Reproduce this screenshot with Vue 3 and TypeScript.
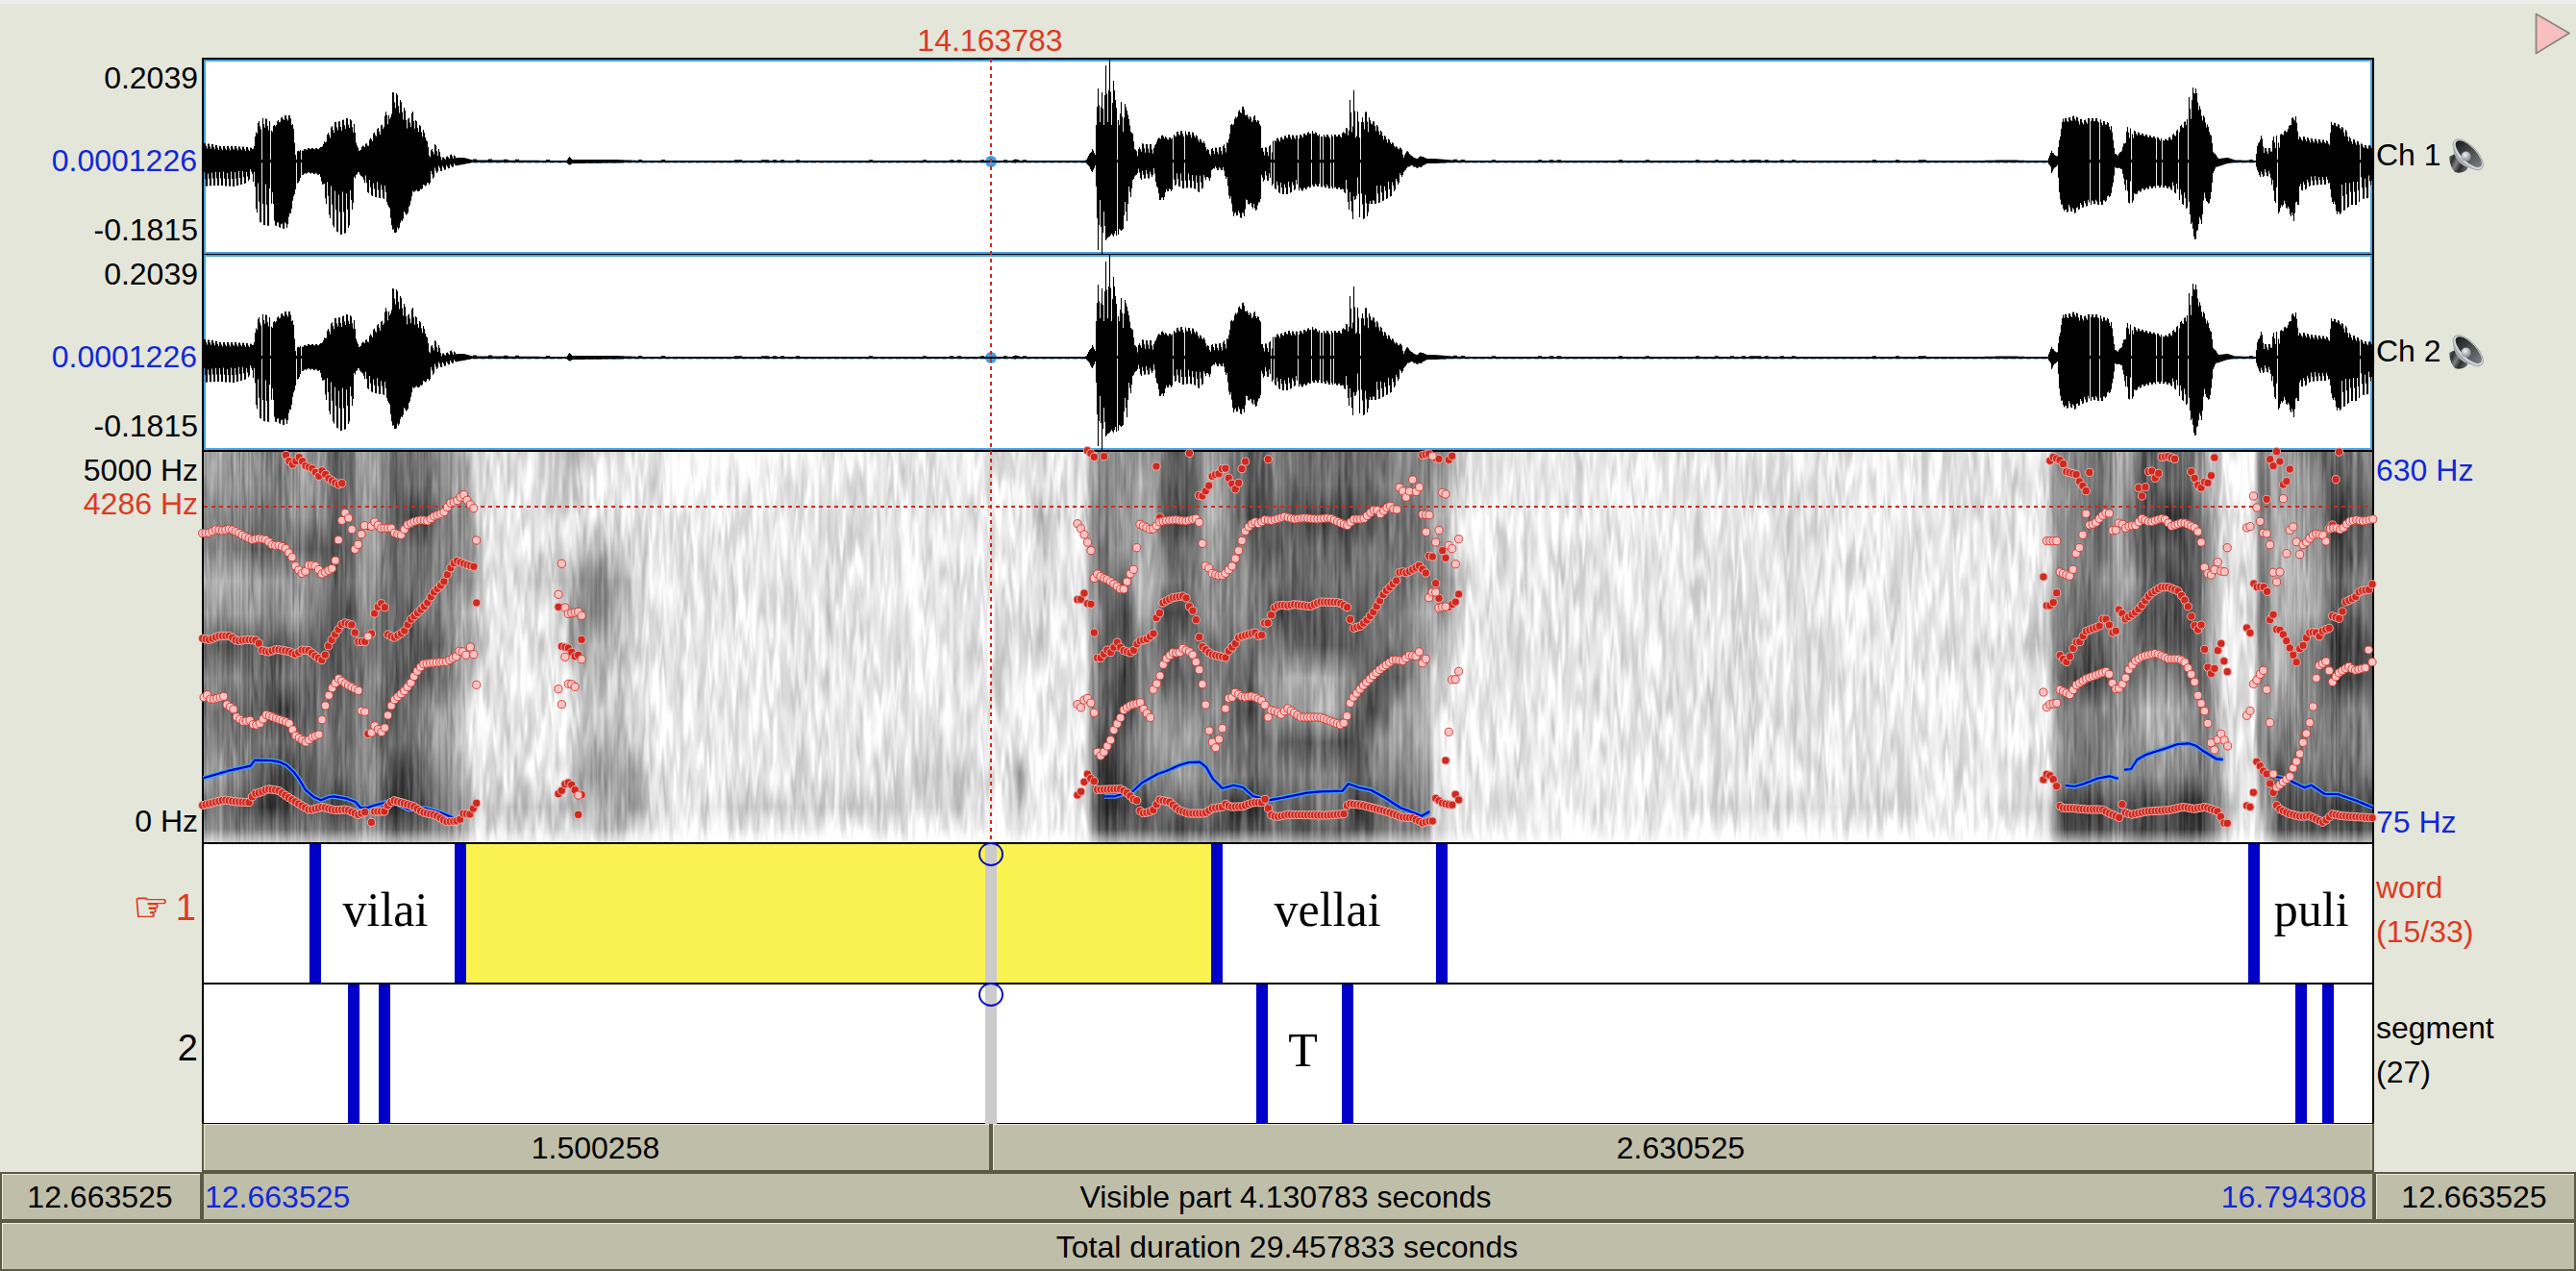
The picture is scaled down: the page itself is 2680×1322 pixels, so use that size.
<script setup lang="ts">
import { onMounted, ref } from 'vue'

type Kind = 'r' | 'p'
interface Dot { x: number; y: number; k: Kind }
interface Interval { to: number; text: string; selected?: boolean }

const LEFT = 211
const RIGHT = 2469
const CURSOR = 1031

/* ---------- waveform: [x, amplitude above zero, amplitude below zero] ---------- */
const envelope: number[][] = [
  [211,19,26],[221,18,25],[229,16,25],[243,16,26],[257,15,22],[262,14,13],[264,16,29],[266,36,49],[269,42,62],[274,46,66],
  [280,42,67],[283,36,32],[285,38,66],[289,43,68],[295,48,70],[298,48,69],[302,48,54],[305,34,39],[307,8,29],[310,12,22],
  [314,12,14],[320,14,12],[332,14,14],[336,18,27],[339,26,44],[343,34,59],[348,41,71],[354,42,76],[360,45,74],[364,44,64],
  [368,39,36],[370,21,14],[373,11,12],[378,18,19],[382,19,32],[387,28,36],[393,35,38],[398,39,38],[402,56,42],[405,44,51],
  [408,72,74],[412,71,74],[416,64,67],[420,56,57],[424,44,54],[429,52,32],[432,43,31],[436,38,31],[440,33,27],[444,21,24],
  [446,9,24],[449,13,19],[452,18,15],[456,13,9],[459,4,10],[464,5,8],[470,8,6],[475,4,4],[482,4,3],[491,1.6,1],
  [584,1,1],[589,1,1],[592,5,4],[595,2,2],[640,2,1.5],[665,1,.6],[1052,.8,.6],[1056,2.5,1.5],[1062,.8,.6],
  [1128,1,.6],[1130,2,2],[1133,8,6],[1136,13,12],[1139,8,4],[1140,38,26],[1142,76,92],[1144,41,40],[1146,72,96],[1148,38,52],
  [1150,100,82],[1152,41,79],[1154,107,78],[1156,38,75],[1158,84,78],[1160,64,72],[1162,48,82],[1164,38,70],[1166,62,72],
  [1168,31,70],[1170,60,42],[1172,53,62],[1174,44,26],[1176,31,37],[1178,29,19],[1180,13,17],[1183,11,12],[1187,19,19],
  [1192,18,17],[1197,18,18],[1200,14,12],[1203,22,26],[1206,26,40],[1210,28,40],[1213,25,31],[1218,25,31],[1221,28,26],
  [1223,31,24],[1230,32,28],[1237,31,27],[1242,30,28],[1247,24,32],[1252,21,26],[1255,14,16],[1258,11,20],[1262,15,7],
  [1266,14,9],[1272,16,9],[1275,21,18],[1277,19,32],[1280,38,42],[1283,42,57],[1287,51,56],[1291,56,59],[1294,58,57],
  [1296,48,42],[1298,50,44],[1302,44,47],[1305,48,52],[1308,43,49],[1311,41,39],[1312,14,24],[1315,15,19],[1319,14,20],
  [1322,19,24],[1326,24,28],[1332,25,34],[1340,28,34],[1347,27,29],[1353,28,31],[1365,32,26],[1373,28,26],[1382,28,28],
  [1395,28,29],[1400,35,34],[1402,34,42],[1404,64,58],[1406,38,52],[1408,74,68],[1410,31,39],[1412,52,32],[1414,31,58],
  [1418,51,60],[1422,52,57],[1425,43,44],[1430,41,44],[1434,35,43],[1440,27,40],[1447,21,36],[1453,15,26],[1458,14,16],
  [1460,4,12],[1463,12,7],[1468,6,4],[1473,3,7],[1478,6,6],[1484,3,2],[1492,3,2],[1510,1.5,1],[1530,.9,.6],
  [2050,.9,.6],[2090,1.6,1],[2110,1,.6],[2130,1,1],[2133,9,6],[2134,12,12],[2137,7,7],[2140,6,4],[2142,24,32],[2144,34,47],[2146,48,49],
  [2148,45,54],[2153,46,51],[2158,48,54],[2162,45,50],[2168,43,47],[2172,45,46],[2178,45,44],[2183,45,45],[2188,42,45],
  [2192,41,39],[2196,37,35],[2198,24,22],[2200,8,7],[2203,7,7],[2207,12,8],[2210,22,24],[2213,36,42],[2217,34,45],
  [2222,31,34],[2229,29,30],[2237,27,28],[2245,25,27],[2252,23,27],[2258,26,29],[2264,32,34],[2268,37,42],[2271,41,45],
  [2274,42,49],[2277,67,45],[2279,51,65],[2281,77,75],[2284,76,84],[2287,61,65],[2290,51,65],[2293,46,35],[2297,36,47],
  [2300,27,35],[2302,11,12],[2305,7,6],[2308,3,5],[2317,4,2],[2325,1.5,1],[2346,1,1],[2348,16,10],[2352,27,18],[2356,14,14],
  [2362,14,17],[2365,26,39],[2368,27,45],[2370,26,54],[2375,31,45],[2380,34,50],[2383,44,57],[2386,47,62],[2388,47,45],
  [2391,27,45],[2393,25,29],[2396,26,31],[2403,24,25],[2413,23,24],[2420,22,24],[2423,19,22],[2425,41,40],[2429,40,48],
  [2432,39,58],[2436,36,52],[2440,33,50],[2445,24,45],[2451,22,45],[2457,18,39],[2463,16,38],[2467,18,20],[2469,15,10],
]
const gaps = [272, 281, 308, 313, 1162, 1220, 1232, 1322, 1325, 1350, 1364, 1373, 1376, 1384, 1387, 1415, 2174, 2184, 2217, 2243, 2249, 2266, 2276, 2369, 2455]
/* stretches whose upper or lower half breaks up into separate glottal pulses */
const combs: [number, number, number, number][] = [
  [211, 262, 0.7, 0.4], [264, 283, 0.7, 0.35], [337, 370, 0.72, 0.4], [378, 402, 0.75, 0.55], [402, 440, 0.72, 0.9],
  [446, 490, 0.4, 0.4], [1183, 1202, 0.5, 0.5], [1221, 1256, 0.8, 0.45], [1258, 1278, 0.45, 0.6], [1312, 1324, 0.4, 0.5],
  [1325, 1350, 0.82, 0.6], [1400, 1424, 0.6, 0.5], [1430, 1460, 0.8, 0.55], [2210, 2220, 0.7, 0.45], [2258, 2276, 0.8, 0.6],
  [2352, 2372, 0.5, 0.55], [2391, 2422, 0.8, 0.6], [2436, 2470, 0.75, 0.4],
]

function hash(a: number, b = 0): number {
  let h = (Math.imul(a | 0, 374761393) + Math.imul(b | 0, 668265263)) | 0
  h = Math.imul(h ^ (h >>> 13), 1274126177)
  return ((h ^ (h >>> 16)) >>> 0) / 4294967296
}

function wavePath(): string {
  const out: string[] = []
  let i = 0
  for (let x = 210; x <= 2469; x++) {
    while (i < envelope.length - 2 && envelope[i + 1][0] < x) i++
    const a = envelope[i]
    const b = envelope[i + 1]
    const t = Math.min(1, Math.max(0, (x - a[0]) / (b[0] - a[0])))
    let up = a[1] + (b[1] - a[1]) * t
    let dn = a[2] + (b[2] - a[2]) * t
    if (up + dn > 8 && !(x > 1139 && x < 1180)) {
      const comb = combs.find(c => x >= c[0] && x < c[1])
      const cu = comb ? comb[2] : 0.86
      const cd = comb ? comb[3] : 0.86
      const ph = x % 4
      if (ph === 2) up *= (cu + 1) / 2
      if (ph === 3) up *= cu + 0.08 * hash(x)
      if (ph === 0) dn *= cd + 0.1 * hash(x, 3)
      if (ph === 1) dn *= (cd + 1) / 2
    } else if (up + dn < 3 && hash(x >> 2, 9) > 0.85) up += 0.9
    if (gaps.includes(x)) { up = Math.min(up, 2); dn = -1 }
    out.push(`M${x + 0.5} ${(108 - Math.max(up, 1)).toFixed(1)}V${(108 + Math.max(dn, 0.9)).toFixed(1)}`)
  }
  return out.join('')
}
const wave = wavePath()

/* ---------- formants: tiles with origin, horizontal scale and tracks ---------- */
const tiles: { x: number; k: number; r: number[][]; p: number[][] }[] = [
  {
    x: 0, k: 2.8,
    r: [
      [833,40,843,60,853,70,872,46,891,74,910,82,929,106,939,88,958,114,970,122,986,132,996,128],
      [590,612,610,616,640,604,670,604,690,620,720,616,750,618,764,650,785,654,805,646,840,652,862,662,880,648,900,650,920,668,938,680,948,662,958,632,972,606,986,584,1000,562,1025,570,1034,594,1042,622,1063,622],
      [1082,597],[1091,534,1100,515,1110,502,1121,515],
      [1130,600,1148,610,1176,592,1195,555,1214,535,1243,505,1262,470,1292,438,1311,395,1328,368,1345,376,1365,384,1380,388],[1388,501],
      [590,1133,630,1122,655,1116,690,1122,728,1124,738,1098,760,1092,780,1082,810,1086,840,1108,870,1128,902,1148,940,1138,975,1148,1010,1146,1044,1162,1063,1154],
      [1082,1186],[1091,1152,1120,1152,1132,1128,1148,1118,1175,1126,1205,1136,1230,1154,1270,1164,1300,1184,1330,1182,1342,1176,1350,1158,1370,1161,1379,1142,1388,1126],
      [1072,264],[1072,910],
    ],
    p: [
      [590,284,612,282,630,272,650,276,670,270,690,280,710,292,735,304,755,300,775,304,795,322,815,322,833,332,853,362,862,390,880,409,891,402,900,382,920,386,938,411,967,394],
      [977,369],[986,305],[996,244,1006,220,1016,238,1025,272],[1034,334,1044,318,1053,286,1062,260],[1082,262,1091,248,1110,268,1140,268,1150,284,1168,290,1186,258,1210,246,1230,242,1248,246,1262,232,1292,220,1311,190,1330,184,1350,162,1365,188,1380,206],[1388,306],
      [594,796,604,788,615,804,652,793,660,818,680,833,690,858,710,872,728,868,740,884,755,880,776,850,800,860,842,876,862,916,891,936,910,920,929,912],
      [938,866],[948,822],[958,790,968,766,986,737,1010,756,1044,775],[1053,838,1063,841],[1072,606],[1082,906,1091,884,1110,906,1121,891],
      [1130,852],[1140,822,1150,802,1176,778,1196,752,1210,722,1232,692,1262,688,1300,685,1330,668,1341,646,1357,664],[1370,639,1380,662],[1388,757],
    ],
  },
  {
    x: 540, k: 2.904,
    r: [[119,514],[189,616],[129,637,149,642,169,668,179,664],[119,1097,129,1087,139,1067,149,1062,159,1069,169,1085],[189,1100],[179,1162]],
    p: [[129,379],[119,475],[139,516,149,535,179,529,189,541],[139,670],[189,677],[119,770],[129,818],[149,754,159,755,169,763],[179,1101]],
  },
  {
    x: 1080, k: 3,
    r: [
      [154,26,164,34,175,46],[206,44],[369,75],[472,34],[502,166,513,168,524,150,534,134,544,104,565,98,576,80,586,82,596,115,616,147,626,127],[636,83,647,60],[718,53],
      [123,491,134,490,144,471,154,503,165,505],[175,594],[185,673,196,673,216,648,226,656,247,624,262,648,288,657,300,648,312,622,340,614,360,597],
      [369,548,380,532,390,500,420,485,452,480,462,486,472,512,483,526,493,554],[503,608],[513,638,540,662,586,672,596,650,616,628,627,608,677,594,687,604,698,602],
      [707,564,718,564,728,538,740,512,760,508,780,510,800,506,850,512,880,498,940,500,965,515],[974,553],[985,580,1006,574,1026,555,1046,530,1067,494,1080,470,1118,432,1128,406,1140,404,1150,408,1190,385,1210,408],
      [1220,355,1231,357],[1241,440,1251,487],[1262,338,1272,361],[1282,514,1303,498,1313,474],
      [1200,40,1220,36],[1241,50,1251,52],[1282,55,1292,43],[1272,993],
      [123,1101,134,1090],[144,1060,154,1035,165,1050,175,1058,185,1084,260,1082,280,1096,298,1114,308,1118,318,1150,330,1158,358,1150,378,1116,410,1122,440,1148,470,1158,520,1158,545,1142,575,1138,586,1128,600,1138,640,1136,670,1124,698,1124,708,1114,718,1142,730,1166,750,1168,780,1162,900,1164,954,1160,964,1134,975,1128,1010,1132,1050,1142,1100,1156,1135,1170,1170,1172,1200,1188,1220,1182,1231,1182],
      [380,234],[1241,1111,1262,1126,1292,1133,1303,1098,1313,1116],
    ],
    p: [
      [123,254,134,270,144,288,154,311,165,338],[175,424,185,411,200,422,220,430,247,450,262,462,268,458,278,434,288,410,298,397],[308,329],[318,256,350,272,360,270,370,260,380,248,400,244,430,242,460,246,493,238,503,250],
      [513,316],[523,386,534,393,544,410,570,418,586,408,606,386,616,362,626,338,636,308,647,276,660,260,676,248,688,254,708,242,730,244,770,232,800,240,830,236,870,240,910,236,940,250,965,260,985,240,1015,240,1046,212,1058,212,1068,224,1097,196,1106,208,1120,210],
      [1128,141,1138,152,1149,172,1159,153],[1169,117],[1180,154,1190,140],[1200,225,1221,227],[1211,280],[1241,312],[1251,275],[1262,157,1272,162],[1282,322,1292,332],[1303,380],[1313,302],[1220,485,1231,467,1241,468],[1251,517,1272,513],[1231,43],
      [123,818,134,828,144,804,154,799,165,814,175,844],[185,967,196,979,206,966,226,930,236,899,257,860,268,834,290,820,308,816,318,810,329,832,350,859],
      [360,772,370,754,380,730,390,695,400,676,420,656,440,658,452,643,475,655,483,664,493,686,503,710],[513,755],[523,819],[534,900],[544,936,554,954,565,926,575,893],[585,831],[595,799,606,796,616,780,640,796,670,792,698,806,708,820],
      [718,858],[728,836,745,840,758,850,778,830,820,858,880,858,945,882,954,876],[964,854],[974,814,984,796,1010,764,1046,728,1070,706,1110,678,1138,682,1160,664,1180,668,1190,653,1200,690,1210,676],
      [1282,904],[1292,741,1303,740,1313,715],
    ],
  },
  {
    x: 2080, k: 2.6133,
    r: [
      [120,420],[129,510,138,510,147,500,156,470],[138,58,147,46,165,56,174,68,182,92,209,100,218,122,227,136,236,152],[245,94],[379,142,388,168,397,140],[406,92,415,90,424,112,433,97],[442,46,460,44,477,52],
      [522,92,531,112,540,134,549,142,558,124,567,127,576,104],[585,48],[736,53,745,74],[754,29],[763,60],[772,132,781,122],[790,84],[915,116],[924,30],
      [165,665,182,687,192,668,200,645,209,624,218,624,227,606,236,590,272,574,281,552,290,552,299,570,308,594,317,589],
      [325,522,334,534,343,552,375,526,388,508,410,474,440,452,460,452,486,464,504,492,513,512,522,543,531,572,540,585,549,570],
      [558,646],[567,702,576,722,585,706],[594,650,603,628],[611,683],[620,716],
      [692,441,700,452,718,450,728,466],[673,579,682,595],[736,554,745,538],[754,584,763,586,772,600,781,620,790,642,808,686],[817,644,826,634,835,610,845,592,862,594,870,606,880,588,897,580],[906,542,924,550,933,528,942,498,968,484,980,464,1005,460,1014,443],
      [727,178],[897,270],[906,258],
      [120,1053,129,1036,138,1040,147,1052,156,1073],[165,1135,175,1142,200,1142,240,1146,280,1146,300,1158,326,1171],[334,1130,343,1156,360,1162,400,1152,460,1148,500,1138,530,1144,560,1138,594,1152,603,1170,611,1188,620,1189],
      [673,1134,682,1138],[691,1093],[700,997,709,1010,718,1026,727,1035],[736,1065,745,1093],[754,1133,764,1146,790,1160,820,1168,845,1166,862,1176,880,1186,890,1178,906,1160,930,1166,1014,1172],
    ],
    p: [
      [129,308,156,308],[120,780],[129,827,138,818,156,814],[165,405,191,418,200,397],[209,347,218,329],[227,289],[236,223,245,258,260,254,275,234,290,220,299,222],[308,275,317,274,326,252,335,256,344,268,355,260,370,260,388,238,410,250,440,238,450,240,468,262,500,250,531,266,540,279,549,312],
      [558,390,567,410,576,414,585,398],[594,374],[603,402,612,404],[620,329],
      [165,772,192,788,209,758,236,738,290,715,299,724,308,752,317,770,326,768,335,754,344,734,353,708,370,682,390,668,427,658,460,676,490,676,504,686,513,704,522,724,531,748],[540,790,549,815,558,839],[567,877],[576,938],[585,960],[594,928,603,910,612,930,621,948],
      [673,267,682,263],[691,168],[700,204],[709,247],[718,283,727,285],[736,320],[745,406],[754,436],[763,405],[772,176],[781,347],[790,274,799,264],[808,311],[817,350],[826,320,835,312,850,292,862,286,880,290],[888,309],[900,270,915,266,930,274,950,248,970,242,990,246,1016,240],
      [691,754,700,742,709,724,718,712],[673,853,682,838],[727,772],[736,875],[745,1035],[754,1077,772,1060,790,1043],[799,1017],[808,996],[817,972],[826,937],[835,909],[844,875],[853,825],[862,736],[870,697,888,684],[897,713],[906,748,920,722,950,700,966,712,995,704],[1004,648],[1014,686],
    ],
  },
]

function expand(): Dot[] {
  const dots: Dot[] = []
  for (const t of tiles) {
    const step = 3.42 * t.k
    const add = (track: number[], k: Kind) => {
      const n = track.length
      const x0 = track[0]
      const x1 = track[n - 2]
      const count = Math.round((x1 - x0) / step)
      for (let j = 0; j <= count; j++) {
        const x = count ? x0 + ((x1 - x0) * j) / count : x0
        let i = 0
        while (i < n - 4 && track[i + 2] < x) i += 2
        const y = n > 2 ? track[i + 1] + ((track[i + 3] - track[i + 1]) * (x - track[i])) / (track[i + 2] - track[i]) : track[1]
        dots.push({ x: t.x + x / t.k, y: 460 + y / 3, k })
      }
    }
    t.r.forEach(a => add(a, 'r'))
    t.p.forEach(a => add(a, 'p'))
  }
  return dots
}
const dots = expand()

const pitchTiles: { x: number; k: number; c: number[][] }[] = [
  { x: 0, k: 2.8, c: [[592,1048,625,1038,670,1024,730,1010,742,992,790,993,815,998,835,1008,855,1028,872,1052,890,1085,915,1108,935,1117,958,1107,972,1105,1010,1112,1035,1122,1050,1140,1070,1140,1100,1130,1130,1122,1150,1125,1190,1145,1240,1142,1280,1154,1322,1172]] },
  { x: 1080, k: 3, c: [[207,1105,240,1105,270,1096,295,1090,325,1062,375,1034,400,1026,440,1008,470,999,505,998,525,1014,545,1050,575,1080,610,1070,640,1077,670,1104,720,1117,770,1108,840,1094,880,1090,950,1088,968,1066,1000,1077,1040,1086,1080,1108,1130,1140,1198,1166,1222,1152]] },
  { x: 2080, k: 2.6133, c: [[180,1071,205,1074,230,1066,270,1048,300,1042,323,1050],[340,1022,358,1020,375,990,400,974,450,956,485,942,515,940,535,947,555,964,590,988,608,990],[752,1044,780,1050,830,1078,848,1070,885,1098,920,1098,970,1118,1016,1140]] },
]
const pitch = pitchTiles.flatMap(t => t.c.map((c) => {
  const q: string[] = []
  for (let i = 0; i < c.length; i += 2) q.push(`${(t.x + c[i] / t.k).toFixed(1)},${(460 + c[i + 1] / 3).toFixed(1)}`)
  return q.join(' ')
}))

/* ---------- spectrogram: energy per column, top to bottom, digits 0-9 ---------- */
const energy: [number, string][] = [
  [211,'4455347565464'],[230,'4455347565464'],[262,'5567447676685'],[280,'6567457786895'],[300,'5556447686885'],[315,'4446446676775'],
  [335,'5557567655675'],[350,'7777777766685'],[362,'6667687766675'],[376,'4444456655564'],[392,'4454566566564'],[408,'6666666776896'],
  [425,'6686677766886'],[440,'6686667755685'],[455,'5565567644565'],[470,'4455545544454'],[483,'3455534322343'],[495,'2223323211121'],
  [510,'1111111111121'],[560,'2111211111131'],[588,'2211322111121'],[592,'3212344222331'],[620,'2123553323432'],[640,'2112433223443'],
  [660,'1111222112441'],[680,'2211111111221'],[700,'0011111111110'],[760,'0111111111120'],[858,'1111111111120'],[861,'1122222211120'],
  [866,'1111111111120'],[1000,'1111111111220'],[1050,'1111111111110'],[1060,'1111111111431'],[1070,'1111111111110'],[1080,'2232222111110'],
  [1110,'1111111110110'],[1128,'1111111111110'],[1133,'4444544444442'],[1142,'5556656667996'],[1155,'5555677778997'],[1168,'4444787887786'],
  [1178,'5444467886676'],[1185,'4333335555586'],[1200,'5444346544576'],[1210,'6786587754567'],[1230,'7786686754478'],[1242,'7776676654467'],
  [1250,'4444456655567'],[1265,'4334546545567'],[1280,'5555556666587'],[1300,'7786556786697'],[1312,'7787666466687'],[1325,'5677686446566'],
  [1345,'6676676347567'],[1380,'6686677337567'],[1400,'7787667458667'],[1410,'6686677677797'],[1430,'6676666785576'],[1450,'5566666744565'],
  [1470,'5566645544565'],[1486,'5555534333455'],[1491,'5444543211221'],[1502,'5434553211121'],[1515,'3211321111111'],[1530,'1111111111110'],
  [1700,'1111111111110'],[1900,'1111111111120'],[2070,'1111111111110'],[2112,'1211112111120'],[2130,'1111112111110'],[2136,'4443444433343'],
  [2145,'5555556765687'],[2165,'5555667855687'],[2185,'6676567855587'],[2195,'5555456755576'],[2203,'3333334443365'],[2215,'4565465655587'],
  [2230,'7787677534588'],[2255,'7797887534588'],[2275,'6787777644598'],[2287,'5567667755698'],[2297,'3344444565577'],[2305,'3333333334455'],
  [2315,'1111111122232'],[2330,'0011111111120'],[2344,'0011111111120'],[2349,'4444444444321'],[2354,'6666666555542'],[2362,'4444444445654'],
  [2370,'4433333346887'],[2382,'4433334456787'],[2400,'5444335555677'],[2415,'6554445655677'],[2425,'6787678865687'],[2440,'6787678855687'],
  [2470,'5676567755687'],
]
const canvas = ref<HTMLCanvasElement | null>(null)

function noise(x: number, y: number, seed: number): number {
  const xi = Math.floor(x)
  const yi = Math.floor(y)
  const sx = x - xi
  const sy = y - yi
  const fx = sx * sx * (3 - 2 * sx)
  const fy = sy * sy * (3 - 2 * sy)
  const a = hash(xi + seed, yi)
  const b = hash(xi + 1 + seed, yi)
  const c = hash(xi + seed, yi + 1)
  const d = hash(xi + 1 + seed, yi + 1)
  return a + (b - a) * fx + (c - a) * fy + (a - b - c + d) * fx * fy
}

onMounted(() => {
  const el = canvas.value
  const ctx = el?.getContext('2d')
  if (!el || !ctx) return
  const w = el.width
  const h = el.height
  const img = ctx.createImageData(w, h)
  let i = 0
  for (let px = 0; px < w; px++) {
    const x = px + LEFT
    while (i < energy.length - 2 && energy[i + 1][0] < x) i++
    const [xa, sa] = energy[i]
    const [xb, sb] = energy[i + 1]
    const t = Math.min(1, Math.max(0, (x - xa) / (xb - xa)))
    const stripe = noise(px / 1.6, 0, 77) - 0.5
    const shift = 40 * noise(px / 3.1, 0, 501)
    for (let y = 0; y < h; y++) {
      const g = Math.min(11.999, (y / h) * 12.1)
      const r = Math.floor(g)
      const f = g - r
      const va = +sa[r] + (+sa[r + 1] - +sa[r]) * f
      const vb = +sb[r] + (+sb[r + 1] - +sb[r]) * f
      const e = (va + (vb - va) * t) / 10
      const n = noise(px / 3.6, (y + shift) / 22, 11) - 0.5
      const m = noise(px / 9, (y + shift) / 45, 901) - 0.5
      const voiced = Math.min(1, Math.max(0, (e - 0.18) / 0.2))
      const quietD = e * 0.85 + n * 0.21 + m * 0.13
      const loudD = 0.04 + e * 0.86 + n * 0.15 + m * 0.06 + stripe * 0.15
      let d = quietD + (loudD - quietD) * voiced
      if (y > h - 14) d *= 0.45 + (0.55 * (h - y)) / 14
      const v = Math.max(22, Math.min(255, 255 * (1 - d)))
      const o = (y * w + px) * 4
      img.data[o] = img.data[o + 1] = img.data[o + 2] = v
      img.data[o + 3] = 255
    }
  }
  ctx.putImageData(img, 0, 0)
})

/* ---------- annotation tiers ---------- */
const tiers: { name: string; count: string; active: boolean; intervals: Interval[]; marks: number[] }[] = [
  {
    name: 'word', count: '(15/33)', active: true, marks: [327.5, 479, 1265.5, 1499.5, 2345],
    intervals: [{ to: 327.5, text: '' }, { to: 477.5, text: 'vilai' }, { to: 1265.5, text: '', selected: true }, { to: 1499.5, text: 'vellai' }, { to: 2345.5, text: '' }, { to: RIGHT, text: 'puli' }],
  },
  {
    name: 'segment', count: '(27)', active: false, marks: [368, 399.5, 1313, 1402, 2394, 2421.5],
    intervals: [{ to: 368, text: '' }, { to: 399.5, text: '' }, { to: 1313, text: '' }, { to: 1401, text: 'T' }, { to: 2394.5, text: '' }, { to: 2421.5, text: '' }, { to: RIGHT, text: '' }],
  },
]
const widthOf = (list: Interval[], i: number) => list[i].to - (i ? list[i - 1].to : LEFT)
</script>

<template>
  <div class="editor">
    <div class="strip"></div>
    <header class="top">
      <span class="time">14.163783</span>
      <svg class="play" width="40" height="46" viewBox="0 0 40 46"><path d="M2.5 2.5V43.500L37 22.500Z" fill="#f7bfc0" stroke="#8b8883" stroke-width="1.800" stroke-linejoin="round" /></svg>
    </header>

    <div v-for="ch in 2" :key="ch" class="row wave-row">
      <div class="left">
        <span class="lab">0.2039</span>
        <span class="lab blue mid">0.0001226</span>
        <span class="lab low">-0.1815</span>
      </div>
      <div class="panel wave" :class="{ first: ch === 1 }">
        <svg width="2260" height="204" viewBox="210 0 2260 204">
          <circle cx="1031" cy="108" r="6" fill="#3f9fe4" />
          <path d="M212 109H2468" stroke="#58aee8" stroke-width="1.500" stroke-dasharray="5 3" />
          <path :d="wave" stroke="#000" stroke-width="1.100" />
        </svg>
      </div>
      <div class="right channel">
        <span>Ch {{ ch }}</span>
        <svg width="36" height="37" viewBox="0 0 36 37">
          <defs>
            <linearGradient :id="'mag' + ch" x1="0" y1="0" x2="1" y2="0.5"><stop offset="0" stop-color="#8f9092" /><stop offset=".25" stop-color="#2d2d2f" /><stop offset=".5" stop-color="#7d7e80" /><stop offset=".75" stop-color="#2a2a2c" /><stop offset="1" stop-color="#5b5c5f" /></linearGradient>
            <linearGradient :id="'cone' + ch" x1="0" y1="0" x2="1" y2="0"><stop offset="0" stop-color="#1c1c1d" /><stop offset="1" stop-color="#7b7c7f" /></linearGradient>
            <radialGradient :id="'cap' + ch" cx=".4" cy=".35"><stop offset="0" stop-color="#f0f3f6" /><stop offset="1" stop-color="#9aa0a5" /></radialGradient>
          </defs>
          <path d="M0 19L6 16L20 29L18 33Q13 37 6 35Q1 30 0 19Z" :fill="'url(#mag' + ch + ')'" />
          <path d="M4 10Q4 15 7 20Q12 28 19 30Q26 33 33 31Z" fill="#a9abaf" />
          <ellipse cx="19.700" cy="16.800" rx="20.300" ry="9.300" transform="rotate(46 19.700 16.800)" fill="#d0d4da" stroke="#96999e" stroke-width=".8" />
          <ellipse cx="20.300" cy="16.100" rx="18" ry="7.300" transform="rotate(46 20.300 16.100)" :fill="'url(#cone' + ch + ')'" />
          <circle cx="17.600" cy="18.600" r="5" :fill="'url(#cap' + ch + ')'" />
        </svg>
      </div>
    </div>

    <div class="row spec-row">
      <div class="left">
        <span class="lab spec-top">5000 Hz</span>
        <span class="lab red">4286 Hz</span>
        <span class="lab spec-end">0 Hz</span>
      </div>
      <div class="panel spec">
        <canvas ref="canvas" width="2257" height="406"></canvas>
        <svg class="tracks" width="2260" height="408" viewBox="210 468 2260 408">
          <path d="M212 527H2468" stroke="#cc2b20" stroke-width="2" stroke-dasharray="4 4" />
          <g fill="none" stroke-linejoin="round">
            <polyline v-for="(p, i) in pitch" :key="'h' + i" :points="p" stroke="#3f9fe8" stroke-width="5" />
            <polyline v-for="(p, i) in pitch" :key="'c' + i" :points="p" stroke="#0000cb" stroke-width="2.200" />
          </g>
          <circle v-for="(d, i) in dots" :key="i" :cx="d.x" :cy="d.y" r="4.100" :class="d.k" />
        </svg>
      </div>
      <div class="right">
        <span class="lab blue spec-top">630 Hz</span>
        <span class="lab blue spec-low">75 Hz</span>
      </div>
    </div>

    <div v-for="(tier, n) in tiers" :key="tier.name" class="row tier-row" :class="{ active: tier.active }">
      <div class="left number"><span v-if="tier.active" class="hand">☞</span><span>{{ n + 1 }}</span></div>
      <div class="panel tier">
        <div v-for="(iv, i) in tier.intervals" :key="i" class="interval" :class="{ selected: iv.selected }" :style="{ width: widthOf(tier.intervals, i) + 'px' }">{{ iv.text }}</div>
        <i v-for="m in tier.marks" :key="m" class="mark" :style="{ left: m - 6 - LEFT - 1 + 'px' }"></i>
        <i class="ghost" :style="{ left: CURSOR - 6 - LEFT - 1 + 'px' }"></i>
        <i class="ring" :style="{ left: CURSOR - 13 - LEFT - 1 + 'px' }"></i>
      </div>
      <div class="right names"><span>{{ tier.name }}</span><span>{{ tier.count }}</span></div>
    </div>

    <div class="row bar-row">
      <div class="left"></div>
      <div class="bars">
        <div class="bar lit before">1.500258</div>
        <div class="bar lit after">2.630525</div>
      </div>
      <div class="right"></div>
    </div>
    <div class="row bar-row">
      <div class="bar lit side">12.663525</div>
      <div class="bar visible"><span class="blue">12.663525</span><span>Visible part 4.130783 seconds</span><span class="blue">16.794308</span></div>
      <div class="bar lit side">12.663525</div>
    </div>
    <div class="bar lit total">Total duration 29.457833 seconds</div>
    <i class="cursor"></i>
  </div>
</template>

<style>
body {
  margin: 0;
}
</style>

<style scoped>
.editor {
  position: relative;
  width: 2680px;
  height: 1322px;
  overflow: hidden;
  background: #e5e6da;
  color: #000;
  font: 32px/36px "Liberation Sans", Arial, sans-serif;
  display: flex;
  flex-direction: column;
}
.editor * {
  box-sizing: border-box;
}
.strip {
  height: 4px;
  background: #ededeb;
}
.top {
  height: 56px;
  display: flex;
  justify-content: flex-end;
  position: relative;
}
.time {
  position: absolute;
  left: 1030px;
  top: 20px;
  transform: translateX(-50%);
  color: #dc3a21;
}
.play {
  margin: 8px 4px 0 0;
}
.row {
  display: grid;
  grid-template-columns: 210px 2260px 210px;
}
.wave-row {
  height: 204px;
}
.spec-row {
  height: 408px;
}
.tier-row {
  height: 146px;
}
.bar-row {
  height: 51px;
}
.left {
  display: flex;
  flex-direction: column;
  align-items: flex-end;
  padding-right: 4px;
}
.right {
  display: flex;
  flex-direction: column;
  align-items: flex-start;
  padding-left: 2px;
  white-space: nowrap;
}
.blue {
  color: #1128d8;
}
.red {
  color: #dc3a21;
}
.lab {
  flex: none;
  height: 36px;
}
.wave-row .left {
  padding-top: 3px;
}
.mid {
  margin-top: 50px;
  margin-right: 1px;
}
.low {
  margin-top: 36px;
}
.panel {
  border-left: 2px solid #000;
  border-right: 2px solid #000;
  background: #fff;
  position: relative;
}
.wave {
  border-top: 1px solid #000;
  box-shadow: inset 0 0 0 2px #4ba3e3;
}
.wave.first {
  border-top-width: 2px;
}
.wave svg {
  position: absolute;
  left: -2px;
  top: -1px;
  overflow: visible;
  z-index: 1;
}
.wave.first svg {
  top: -2px;
}
.channel {
  flex-direction: row;
  padding-top: 83px;
}
.channel svg {
  margin: 1px 0 0 8px;
}
.spec {
  border-top: 2px solid #000;
  z-index: 2;
}
.spec canvas {
  display: block;
  width: 2256px;
  height: 406px;
}
.tracks {
  position: absolute;
  left: -2px;
  top: -2px;
  overflow: visible;
}
.r {
  fill: #cf2a20;
  stroke: #f3b3ad;
  stroke-width: 0.9px;
}
.p {
  fill: #f9c2c2;
  stroke: #d0392e;
  stroke-width: 0.9px;
}
.spec-top {
  margin-top: 3px;
}
.spec-row .red {
  margin-top: -1px;
}
.spec-end {
  margin-top: 294px;
}
.spec-low {
  margin-top: 330px;
}
.number {
  flex-direction: row;
  justify-content: flex-end;
  align-items: center;
  padding-bottom: 10px;
  font-size: 38px;
}
.active .number {
  padding-right: 6px;
}
.hand {
  font-family: "DejaVu Sans", sans-serif;
  font-size: 42px;
  margin-right: 7px;
  -webkit-text-stroke: 0.7px #dc3a21;
}
.active .number,
.active .names {
  color: #dc3a21;
}
.names {
  padding-top: 24px;
  line-height: 46px;
}
.tier {
  display: flex;
  border-top: 2px solid #000;
}
.interval {
  flex: none;
  height: 144px;
  display: flex;
  align-items: center;
  justify-content: center;
  padding: 0 5px 8px 0;
  font: 50px/60px "Liberation Serif", "Times New Roman", serif;
  color: #000;
}
.interval:last-of-type {
  flex: 1 1 0;
}
.selected {
  background: #faf250;
}
.mark,
.ghost {
  position: absolute;
  top: 0;
  width: 12px;
  height: 145px;
  background: #0000c8;
}
.ghost {
  background: #cbcbcb;
}
.ring {
  position: absolute;
  top: -2px;
  width: 26px;
  height: 25px;
  border: 2px solid #0a0ac4;
  border-radius: 50%;
}
.bars {
  display: flex;
}
.bar {
  height: 51px;
  border: 2px solid #5b5a45;
  background: #bfbea8;
  display: flex;
  align-items: center;
  justify-content: center;
  padding-top: 2px;
  white-space: nowrap;
}
.side {
  padding: 0 2px 0 0;
}
.lit {
  box-shadow: inset 1px 1px 0 #ecebd6;
}
.bars .bar {
  border-top: 1px solid #000;
}
.before {
  width: 821px;
  padding-right: 2px;
}
.after {
  flex: 1;
  padding-right: 4px;
}
.visible {
  justify-content: space-between;
  padding: 0 6px 0 1px;
}
.total {
  height: 52px;
  padding-right: 2px;
}
.cursor {
  position: absolute;
  z-index: 3;
  left: 1030px;
  top: 61px;
  width: 2px;
  height: 815px;
  background: repeating-linear-gradient(#cc2b20 0 4px, transparent 4px 8px);
}
</style>
